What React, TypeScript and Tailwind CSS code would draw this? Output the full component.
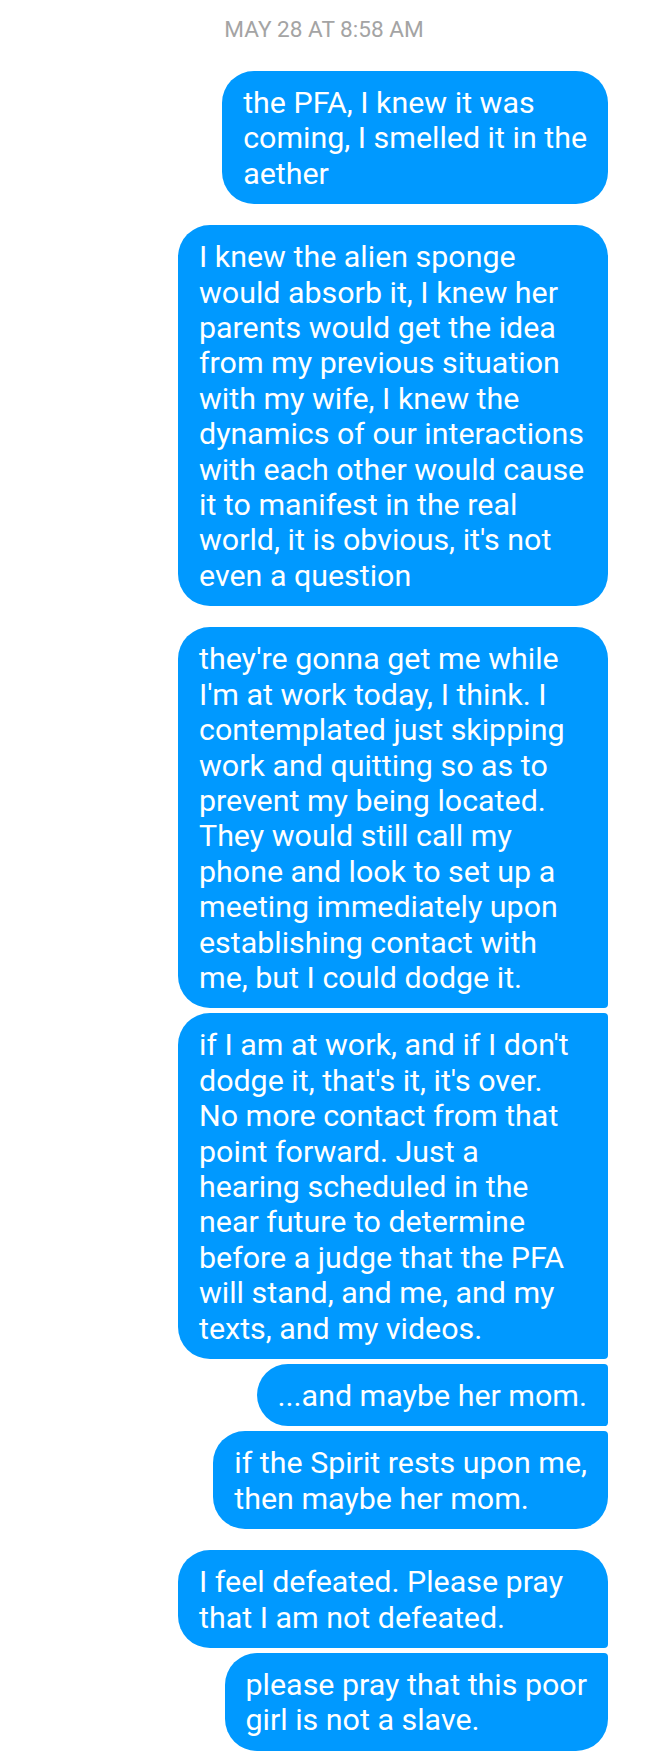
import React from 'react';

type Bubble = { lines: string[]; full?: boolean };

const GROUPS: Bubble[][] = [
    [{ lines: ['the PFA, I knew it was', 'coming, I smelled it in the', 'aether'] }],
    [
        {
            full: true,
            lines: [
                'I knew the alien sponge',
                'would absorb it, I knew her',
                'parents would get the idea',
                'from my previous situation',
                'with my wife, I knew the',
                'dynamics of our interactions',
                'with each other would cause',
                'it to manifest in the real',
                "world, it is obvious, it's not",
                'even a question',
            ],
        },
    ],
    [
        {
            full: true,
            lines: [
                "they're gonna get me while",
                "I'm at work today, I think. I",
                'contemplated just skipping',
                'work and quitting so as to',
                'prevent my being located.',
                'They would still call my',
                'phone and look to set up a',
                'meeting immediately upon',
                'establishing contact with',
                'me, but I could dodge it.',
            ],
        },
        {
            full: true,
            lines: [
                "if I am at work, and if I don't",
                "dodge it, that's it, it's over.",
                'No more contact from that',
                'point forward. Just a',
                'hearing scheduled in the',
                'near future to determine',
                'before a judge that the PFA',
                'will stand, and me, and my',
                'texts, and my videos.',
            ],
        },
        { lines: ['...and maybe her mom.'] },
        { lines: ['if the Spirit rests upon me,', 'then maybe her mom.'] },
    ],
    [
        { full: true, lines: ['I feel defeated. Please pray', 'that I am not defeated.'] },
        { lines: ['please pray that this poor', 'girl is not a slave.'] },
    ],
];

// corner shape depends on where the bubble sits in its group
const cornerClass = (i: number, n: number) => {
    if (n === 1) return 'rounded-[32px]';
    if (i === 0) return 'rounded-l-[32px] rounded-tr-[32px] rounded-br-[4px]';
    if (i === n - 1) return 'rounded-l-[32px] rounded-tr-[4px] rounded-br-[32px]';
    return 'rounded-l-[32px] rounded-r-[4px]';
};

const MessageBubble: React.FC<{ bubble: Bubble; corners: string }> = ({ bubble, corners }) => (
    <div
        className={`bg-[#0099ff] text-white text-[30.4px] leading-[35.4px] px-[21px] pt-[14px] pb-[13px] ${corners} ${bubble.full ? 'w-[430px]' : 'w-fit max-w-[430px]'}`}
    >
        {bubble.lines.map((line, idx) => (
            <div key={idx} className="whitespace-nowrap">
                {line}
            </div>
        ))}
    </div>
);

export default function App() {
    return (
        <div className="w-[648px] min-h-[1762px] bg-white font-['Roboto',sans-serif]">
            <div className="pt-[17px] pb-[28px] text-center text-[22.6px] leading-[26px] text-[#a4a4a4] uppercase">
                May 28 at 8:58 AM
            </div>
            <div className="flex flex-col gap-[21px] pr-[40px]">
                {GROUPS.map((group, gi) => (
                    <div key={gi} className="flex flex-col items-end gap-[5px]">
                        {group.map((b, bi) => (
                            <MessageBubble key={bi} bubble={b} corners={cornerClass(bi, group.length)} />
                        ))}
                    </div>
                ))}
            </div>
        </div>
    );
}
